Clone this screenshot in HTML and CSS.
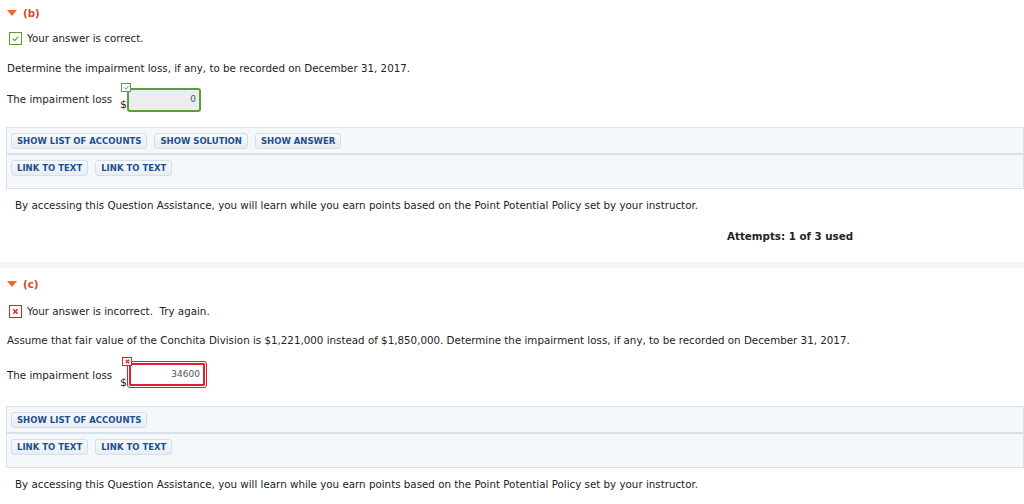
FILE: index.html
```html
<!DOCTYPE html>
<html>
<head>
<meta charset="utf-8">
<link rel="stylesheet" href="styles.css">
</head>
<body>
<section class="part part-b">
  <div class="part-head"><span class="tri"></span><span class="label">(b)</span></div>
  <div class="status"><span class="ico ok"><svg viewBox="0 0 10 10" width="9" height="9"><path d="M2 5.2 L4.2 7.3 L8 2.8" fill="none" stroke="#5a9e3c" stroke-width="1.3"/></svg></span>Your answer is correct.</div>
  <p class="q">Determine the impairment loss, if any, to be recorded on December 31, 2017.</p>
  <div class="answer-row">
    <span class="alabel">The impairment loss</span>
    <span class="dollar">$</span>
    <span class="field ok-field"><span class="mini ok"><svg viewBox="0 0 10 10" width="7" height="7"><path d="M2 5.2 L4.2 7.3 L8 2.8" fill="none" stroke="#5a9e3c" stroke-width="1.4"/></svg></span><span class="val">0</span></span>
  </div>
  <div class="assist">
    <div class="arow"><span class="btn">SHOW LIST OF ACCOUNTS</span><span class="btn">SHOW SOLUTION</span><span class="btn">SHOW ANSWER</span></div>
    <div class="arow last"><span class="btn">LINK TO TEXT</span><span class="btn">LINK TO TEXT</span></div>
  </div>
  <p class="note">By accessing this Question Assistance, you will learn while you earn points based on the Point Potential Policy set by your instructor.</p>
  <p class="attempts">Attempts: 1 of 3 used</p>
</section>
<div class="band"></div>
<section class="part part-c">
  <div class="part-head"><span class="tri"></span><span class="label">(c)</span></div>
  <div class="status"><span class="ico bad"><svg viewBox="0 0 10 10" width="9" height="9"><path d="M2.6 2.6 L7.4 7.4 M7.4 2.6 L2.6 7.4" fill="none" stroke="#e0202f" stroke-width="1.6"/></svg></span>Your answer is incorrect.&nbsp; Try again.</div>
  <p class="q">Assume that fair value of the Conchita Division is $1,221,000 instead of $1,850,000. Determine the impairment loss, if any, to be recorded on December 31, 2017.</p>
  <div class="answer-row">
    <span class="alabel">The impairment loss</span>
    <span class="dollar">$</span>
    <span class="field bad-field"><span class="mini bad"><svg viewBox="0 0 10 10" width="7" height="7"><path d="M2.5 2.5 L7.5 7.5 M7.5 2.5 L2.5 7.5" fill="none" stroke="#e0202f" stroke-width="1.8"/></svg></span><span class="val">34600</span></span>
  </div>
  <div class="assist">
    <div class="arow"><span class="btn">SHOW LIST OF ACCOUNTS</span></div>
    <div class="arow last"><span class="btn">LINK TO TEXT</span><span class="btn">LINK TO TEXT</span></div>
  </div>
  <p class="note">By accessing this Question Assistance, you will learn while you earn points based on the Point Potential Policy set by your instructor.</p>
</section>
</body>
</html>
```
FILE: styles.css
```css
html, body { margin: 0; padding: 0; background: #fff; }
body {
  font-family: "DejaVu Sans", Verdana, sans-serif;
  font-size: 10.3px;
  line-height: 12px;
  color: #222;
  width: 1024px;
  height: 504px;
  overflow: hidden;
}
p { margin: 0; }
.part-head {
  display: flex;
  align-items: center;
  height: 14px;
  padding: 6px 0 0 7px;
}
.part-c .part-head { padding-top: 9px; }
.tri {
  width: 0; height: 0;
  border-left: 5px solid transparent;
  border-right: 5px solid transparent;
  border-top: 6px solid #f26722;
  margin-right: 6px;
}
.label { color: #d9481c; font-weight: bold; }
.status {
  display: flex;
  align-items: center;
  padding: 11px 0 0 9px;
  height: 14px;
}
.part-c .status { padding-top: 13px; }
.ico {
  width: 13px; height: 13px;
  box-sizing: border-box;
  display: inline-flex; align-items: center; justify-content: center;
  margin-right: 5px;
  background: #fff;
}
.ico.ok { border: 1px solid #5a9e3c; }
.ico.bad { border: 1px solid #e0202f; }
.q { padding: 17px 0 0 7px; height: 12px; }
.part-c .q { padding-top: 16px; }
.answer-row {
  display: flex;
  align-items: flex-start;
  padding: 14px 0 0 7px;
}
.part-c .answer-row { padding-top: 15px; }
.alabel { padding-top: 5px; width: 113px; }
.part-c .alabel { padding-top: 8px; }
.dollar { padding-top: 10px; font-size: 11px; line-height: 13px; width: 7px; }
.part-c .dollar { padding-top: 15px; }
.field {
  position: relative;
  display: block;
  box-sizing: border-box;
  border-radius: 3px;
}
.ok-field { width: 74px; height: 24px; border: 2px solid #5a9e3c; background: #ebedef; }
.bad-field {
  width: 80px; height: 27px;
  border: 3px double #e0202f;
  background: #fff;
  outline: 1px solid #e0202f;
  outline-offset: -4px;
}
.mini {
  position: absolute;
  left: -8px; top: -7px;
  width: 10px; height: 9px;
  box-sizing: border-box;
  display: flex; align-items: center; justify-content: center;
  background: #fff;
}
.mini.ok { border: 1px solid #5a9e3c; }
.mini.bad { border: 1px solid #e0202f; }
.val { position: absolute; right: 3px; top: 4px; font-size: 9px; line-height: 11px; color: #555; }
.bad-field .val { top: 5px; right: 4px; }
.assist {
  margin: 15px 0 0 6px;
  border: 1px solid #d8e1ea;
  background: #f5f8fb;
}
.part-c .assist { margin-top: 17px; }
.arow {
  display: flex;
  gap: 7px;
  padding: 5px 5px 4px 4px;
  border-bottom: 2px solid #d8e1ea;
}
.arow.last { border-bottom: 0; padding-bottom: 12px; }
.btn {
  display: inline-block;
  font-size: 8.5px;
  font-weight: bold;
  color: #1d4f8e;
  padding: 2px 5px 1px 5px;
  border: 1px solid #d6dee7;
  border-radius: 3px;
  background: linear-gradient(#f7f9fb, #e8edf3);
  line-height: 11px;
}
.note { padding: 10px 0 0 15px; height: 12px; }
.attempts { font-weight: bold; padding: 19px 0 0 727px; height: 12px; }
.band { height: 6px; background: #f4f7fa; margin-top: 20px; }
```
